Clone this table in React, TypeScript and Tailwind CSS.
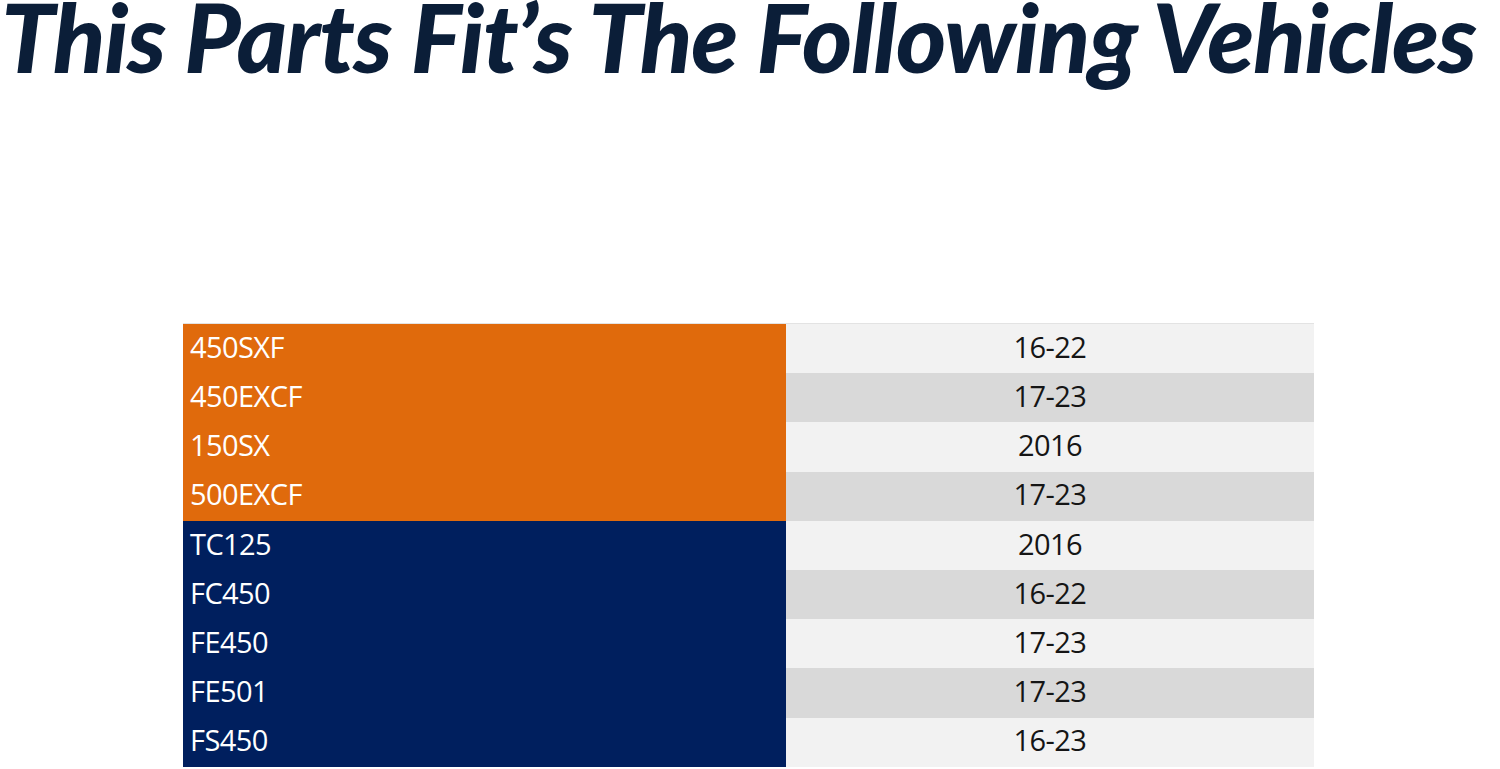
import React from 'react'

const rows = [
  { model: '450SXF', years: '16-22', brand: 'ktm' },
  { model: '450EXCF', years: '17-23', brand: 'ktm' },
  { model: '150SX', years: '2016', brand: 'ktm' },
  { model: '500EXCF', years: '17-23', brand: 'ktm' },
  { model: 'TC125', years: '2016', brand: 'husq' },
  { model: 'FC450', years: '16-22', brand: 'husq' },
  { model: 'FE450', years: '17-23', brand: 'husq' },
  { model: 'FE501', years: '17-23', brand: 'husq' },
  { model: 'FS450', years: '16-23', brand: 'husq' },
]

export default function App() {
  return (
    <div className="w-[1500px] h-[769px] bg-white">
      {/* Heading */}
      <h1
        className="pt-[4px] pl-[1px] text-[#0b1e38] text-[96px] leading-[64px] font-black italic tracking-[-0.012em] whitespace-nowrap"
        style={{ fontFamily: 'Lato, "Noto Sans", sans-serif' }}
      >
        This Parts Fit’s The Following Vehicles
      </h1>

      {/* Fitment table */}
      <div
        className="mt-[255px] ml-[183px] w-[1131px] flex flex-col border-t border-[#e3e3e3]"
        style={{ fontFamily: '"Open Sans", "Noto Sans", sans-serif' }}
      >
        {rows.map((row, i) => (
          <div key={row.model} className="flex h-[49.2px]">
            <div
              className={`w-[603px] flex items-center pl-[7px] pb-[4px] text-white text-[29px] tracking-[-0.02em] ${
                row.brand === 'ktm' ? 'bg-[#e06a0c]' : 'bg-[#001f5e]'
              }`}
            >
              {row.model}
            </div>
            <div
              className={`flex-1 flex items-center justify-center pb-[4px] text-[#151515] text-[29px] tracking-[-0.02em] ${
                i % 2 === 0 ? 'bg-[#f2f2f2]' : 'bg-[#d9d9d9]'
              }`}
            >
              {row.years}
            </div>
          </div>
        ))}
      </div>
    </div>
  )
}
